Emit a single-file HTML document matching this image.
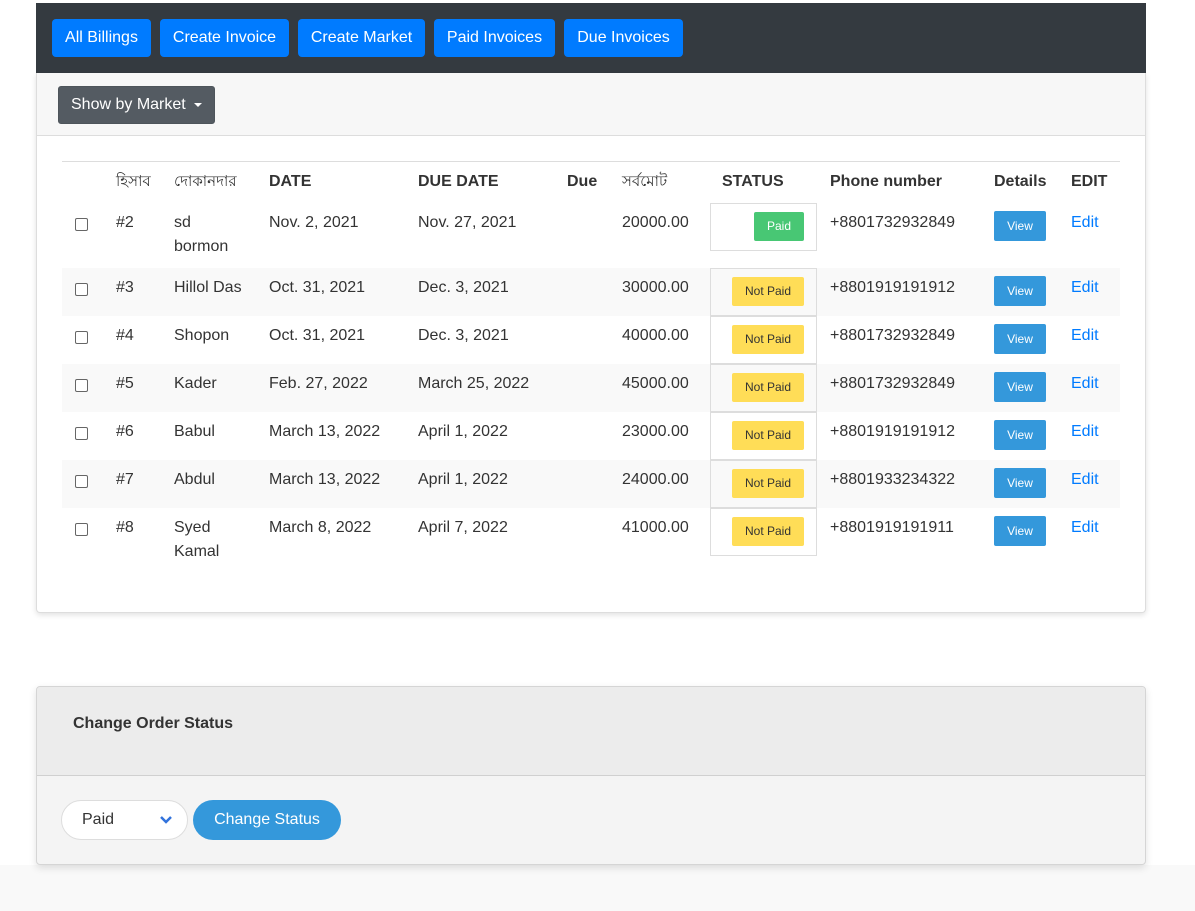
<!DOCTYPE html>
<html><head><meta charset="utf-8"><style>
*{box-sizing:border-box;margin:0;padding:0}
body{width:1195px;height:911px;background:#fff;font-family:"Liberation Sans",sans-serif;color:#333;position:relative;overflow:hidden;font-size:16px}
.a{position:absolute}
.nav{left:36px;top:3px;width:1110px;height:70px;background:#343a40}
.nb{position:absolute;top:16px;height:38px;background:#007bff;color:#fff;border-radius:4px;line-height:38px;text-align:center;font-size:16px}
.card{left:36px;top:73px;width:1110px;height:540px;border:1px solid #ddd;border-top:none;border-radius:0 0 4px 4px;box-shadow:0 2px 6px rgba(0,0,0,.12);background:#fff}
.ch{position:absolute;left:0;top:0;width:100%;height:63px;background:#f7f7f7;border-bottom:1px solid #ddd}
.sbm{position:absolute;left:21px;top:13px;width:157px;height:38px;background:#545b62;border:1px solid #4e555b;color:#fff;border-radius:3px;line-height:36px;padding-left:12px}
.sbm:after{content:"";position:absolute;right:12px;top:16px;border-left:4px solid transparent;border-right:4px solid transparent;border-top:4px solid #fff}
.row{position:absolute;left:62px;width:1058px}
.c{position:absolute;line-height:24px}
.h{font-weight:bold}
.cb{position:absolute;left:13px;width:13px;height:13px;border:1.5px solid #666;border-radius:2px;background:#fff}
.st{position:absolute;left:648px;width:107px;height:48px;border:1px solid #ddd}
.bd{position:absolute;top:8px;height:29px;border-radius:2px;font-size:12px;line-height:29px;text-align:center}
.paid{background:#48c774;color:#fff;left:43px;width:50px}
.np{background:#ffdd57;color:#333;left:21px;width:72px}
.vw{position:absolute;left:932px;width:52px;height:30px;background:#3498db;color:#fff;font-size:12px;line-height:30px;text-align:center;border-radius:2px}
.ed{position:absolute;left:1009px;color:#007bff;line-height:24px}
</style></head><body>
<div class="a nav">
<div class="nb" style="left:16px;width:99px">All Billings</div>
<div class="nb" style="left:124px;width:129px">Create Invoice</div>
<div class="nb" style="left:262px;width:127px">Create Market</div>
<div class="nb" style="left:398px;width:121px">Paid Invoices</div>
<div class="nb" style="left:528px;width:119px">Due Invoices</div>
</div>
<div class="a card"><div class="ch"><div class="sbm">Show by Market</div></div></div>
<div class="a" style="left:62px;top:161px;width:1058px;height:1px;background:#ddd"></div>
<div class="row" style="top:170px;height:24px">
<div class="c" style="left:54px;font-family:'Liberation Sans','Noto Sans CJK SC',sans-serif;font-size:15px">হিসাব</div>
<div class="c" style="left:112px;font-size:15px">দোকানদার</div>
<div class="c h" style="left:207px">DATE</div>
<div class="c h" style="left:356px">DUE DATE</div>
<div class="c h" style="left:505px">Due</div>
<div class="c" style="left:560px;font-size:15px">সর্বমোট</div>
<div class="c h" style="left:660px">STATUS</div>
<div class="c h" style="left:768px">Phone number</div>
<div class="c h" style="left:932px">Details</div>
<div class="c h" style="left:1009px">EDIT</div>
</div>

<div class="row" style="top:203px;height:65px">
<div class="cb" style="top:15px"></div><div class="c" style="left:54px;top:8px">#2</div>
<div class="c" style="left:112px;top:8px">sd<br>bormon</div><div class="c" style="left:207px;top:8px">Nov. 2, 2021</div>
<div class="c" style="left:356px;top:8px">Nov. 27, 2021</div><div class="c" style="left:560px;top:8px">20000.00</div>
<div class="st" style="top:0"><div class="bd paid">Paid</div></div>
<div class="c" style="left:768px;top:8px">+8801732932849</div><div class="vw" style="top:8px">View</div><div class="ed" style="top:8px">Edit</div>
</div>
<div class="row" style="top:268px;height:48px;background:#f9f9f9">
<div class="cb" style="top:15px"></div><div class="c" style="left:54px;top:8px">#3</div>
<div class="c" style="left:112px;top:8px">Hillol Das</div><div class="c" style="left:207px;top:8px">Oct. 31, 2021</div>
<div class="c" style="left:356px;top:8px">Dec. 3, 2021</div><div class="c" style="left:560px;top:8px">30000.00</div>
<div class="st" style="top:0"><div class="bd np">Not Paid</div></div>
<div class="c" style="left:768px;top:8px">+8801919191912</div><div class="vw" style="top:8px">View</div><div class="ed" style="top:8px">Edit</div>
</div>
<div class="row" style="top:316px;height:48px">
<div class="cb" style="top:15px"></div><div class="c" style="left:54px;top:8px">#4</div>
<div class="c" style="left:112px;top:8px">Shopon</div><div class="c" style="left:207px;top:8px">Oct. 31, 2021</div>
<div class="c" style="left:356px;top:8px">Dec. 3, 2021</div><div class="c" style="left:560px;top:8px">40000.00</div>
<div class="st" style="top:0"><div class="bd np">Not Paid</div></div>
<div class="c" style="left:768px;top:8px">+8801732932849</div><div class="vw" style="top:8px">View</div><div class="ed" style="top:8px">Edit</div>
</div>
<div class="row" style="top:364px;height:48px;background:#f9f9f9">
<div class="cb" style="top:15px"></div><div class="c" style="left:54px;top:8px">#5</div>
<div class="c" style="left:112px;top:8px">Kader</div><div class="c" style="left:207px;top:8px">Feb. 27, 2022</div>
<div class="c" style="left:356px;top:8px">March 25, 2022</div><div class="c" style="left:560px;top:8px">45000.00</div>
<div class="st" style="top:0"><div class="bd np">Not Paid</div></div>
<div class="c" style="left:768px;top:8px">+8801732932849</div><div class="vw" style="top:8px">View</div><div class="ed" style="top:8px">Edit</div>
</div>
<div class="row" style="top:412px;height:48px">
<div class="cb" style="top:15px"></div><div class="c" style="left:54px;top:8px">#6</div>
<div class="c" style="left:112px;top:8px">Babul</div><div class="c" style="left:207px;top:8px">March 13, 2022</div>
<div class="c" style="left:356px;top:8px">April 1, 2022</div><div class="c" style="left:560px;top:8px">23000.00</div>
<div class="st" style="top:0"><div class="bd np">Not Paid</div></div>
<div class="c" style="left:768px;top:8px">+8801919191912</div><div class="vw" style="top:8px">View</div><div class="ed" style="top:8px">Edit</div>
</div>
<div class="row" style="top:460px;height:48px;background:#f9f9f9">
<div class="cb" style="top:15px"></div><div class="c" style="left:54px;top:8px">#7</div>
<div class="c" style="left:112px;top:8px">Abdul</div><div class="c" style="left:207px;top:8px">March 13, 2022</div>
<div class="c" style="left:356px;top:8px">April 1, 2022</div><div class="c" style="left:560px;top:8px">24000.00</div>
<div class="st" style="top:0"><div class="bd np">Not Paid</div></div>
<div class="c" style="left:768px;top:8px">+8801933234322</div><div class="vw" style="top:8px">View</div><div class="ed" style="top:8px">Edit</div>
</div>
<div class="row" style="top:508px;height:60px">
<div class="cb" style="top:15px"></div><div class="c" style="left:54px;top:8px">#8</div>
<div class="c" style="left:112px;top:8px">Syed<br>Kamal</div><div class="c" style="left:207px;top:8px">March 8, 2022</div>
<div class="c" style="left:356px;top:8px">April 7, 2022</div><div class="c" style="left:560px;top:8px">41000.00</div>
<div class="st" style="top:0"><div class="bd np">Not Paid</div></div>
<div class="c" style="left:768px;top:8px">+8801919191911</div><div class="vw" style="top:8px">View</div><div class="ed" style="top:8px">Edit</div>
</div>

<div class="a" style="left:0;top:865px;width:1195px;height:46px;background:#f9f9f9"></div>
<div class="a" style="left:36px;top:686px;width:1110px;height:179px;border:1px solid #d5d5d5;border-radius:4px;background:#f4f4f4;box-shadow:0 3px 8px rgba(0,0,0,.12);overflow:hidden">
<div style="position:absolute;left:0;top:0;width:100%;height:89px;background:#ececec;border-bottom:1px solid #d0d0d0"></div>
<div style="position:absolute;left:36px;top:28px;font-weight:bold;font-size:16px">Change Order Status</div>
<div style="position:absolute;left:24px;top:113px;width:127px;height:40px;border:1px solid #ddd;border-radius:20px;background:#fff;line-height:38px;padding-left:20px">Paid
<svg style="position:absolute;right:14px;top:14px" width="14" height="10" viewBox="0 0 14 10"><path d="M2 2 L7 7 L12 2" fill="none" stroke="#3273dc" stroke-width="2.5"/></svg></div>
<div style="position:absolute;left:156px;top:113px;width:148px;height:40px;border-radius:20px;background:#3498db;color:#fff;line-height:40px;text-align:center">Change Status</div>
</div>
</body></html>
